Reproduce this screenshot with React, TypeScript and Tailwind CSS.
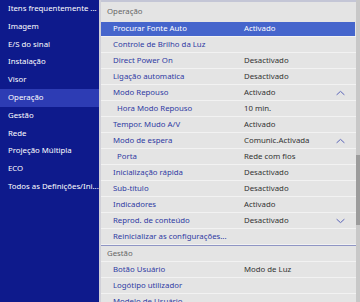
import React from 'react';

const menu = [
  'Itens frequentemente ...',
  'Imagem',
  'E/S do sinal',
  'Instalação',
  'Visor',
  'Operação',
  'Gestão',
  'Rede',
  'Projeção Múltipla',
  'ECO',
  'Todos as Definições/Ini...',
];

type Row = { label: string; value?: string; indent?: boolean; chevron?: 'up' | 'down'; active?: boolean };

const opRows: Row[] = [
  { label: 'Procurar Fonte Auto', value: 'Activado', active: true },
  { label: 'Controle de Brilho da Luz' },
  { label: 'Direct Power On', value: 'Desactivado' },
  { label: 'Ligação automatica', value: 'Desactivado' },
  { label: 'Modo Repouso', value: 'Activado', chevron: 'up' },
  { label: 'Hora Modo Repouso', value: '10 min.', indent: true },
  { label: 'Tempor. Mudo A/V', value: 'Activado' },
  { label: 'Modo de espera', value: 'Comunic.Activada', chevron: 'up' },
  { label: 'Porta', value: 'Rede com fios', indent: true },
  { label: 'Inicialização rápida', value: 'Desactivado' },
  { label: 'Sub-título', value: 'Desactivado' },
  { label: 'Indicadores', value: 'Activado' },
  { label: 'Reprod. de conteúdo', value: 'Desactivado', chevron: 'down' },
  { label: 'Reinicializar as configurações...' },
];

const gestRows: Row[] = [
  { label: 'Botão Usuário', value: 'Modo de Luz' },
  { label: 'Logótipo utilizador' },
  { label: 'Modelo de Usuário' },
];

const Chevron = ({ dir }: { dir: 'up' | 'down' }) => (
  <svg width="9" height="5" viewBox="0 0 9 5" className="absolute right-[11px] top-1/2 -translate-y-1/2">
    <path
      d={dir === 'up' ? 'M0.5 4.5 L4.5 0.8 L8.5 4.5' : 'M0.5 0.5 L4.5 4.2 L8.5 0.5'}
      fill="none"
      stroke="#5a64b8"
      strokeWidth="1"
    />
  </svg>
);

const SettingRow = ({ row }: { row: Row }) => (
  <div className="relative h-4 border-b border-[#f2f2f2] flex items-center">
    {row.active && <div className="absolute left-0 right-[1px] top-[1px] bottom-0 bg-[#4565cc]" />}
    <span
      className={`relative w-[143px] shrink-0 whitespace-nowrap ${row.indent ? 'pl-[16px]' : 'pl-[12px]'} ${
        row.active ? 'text-white' : 'text-[#2f3aa3]'
      }`}
    >
      {row.label}
    </span>
    {row.value && (
      <span className={`relative whitespace-nowrap ${row.active ? 'text-white' : 'text-[#333]'}`}>{row.value}</span>
    )}
    {row.chevron && <Chevron dir={row.chevron} />}
  </div>
);

export default function App() {
  return (
    <div
      className="w-[360px] h-[302px] flex overflow-hidden text-[7.8px] leading-none bg-[#e4e4e4]"
      style={{ fontFamily: '"Noto Sans", "Open Sans", sans-serif' }}
    >
      <div className="w-[99px] shrink-0 bg-[#0e1a8c] text-white">
        {menu.map((m) => (
          <div
            key={m}
            className={`h-[17.8px] flex items-center pl-[8px] whitespace-nowrap overflow-hidden ${
              m === 'Operação' ? 'bg-[#2d3cb4]' : ''
            }`}
          >
            {m}
          </div>
        ))}
      </div>
      <div className="w-[2px] shrink-0 bg-[#d0d0d8]" />
      <div className="flex-1 flex">
        <div className="flex-1 border-t-2 border-[#c4c6d6]">
          <div className="h-[19px] flex items-center pl-[6px] text-[#666]">Operação</div>
          {opRows.map((r) => (
            <SettingRow key={r.label} row={r} />
          ))}
          <div className="h-px bg-[#8f95c4]" />
          <div className="h-4 flex items-center pl-[6px] text-[#666] border-b border-[#f2f2f2]">Gestão</div>
          {gestRows.map((r) => (
            <SettingRow key={r.label} row={r} />
          ))}
        </div>
        <div className="w-[4px] shrink-0 bg-[#c8c8c8] flex flex-col">
          <div className="h-[155px]" />
          <div className="h-[70px] bg-[#9c9c9c]" />
        </div>
      </div>
    </div>
  );
}
